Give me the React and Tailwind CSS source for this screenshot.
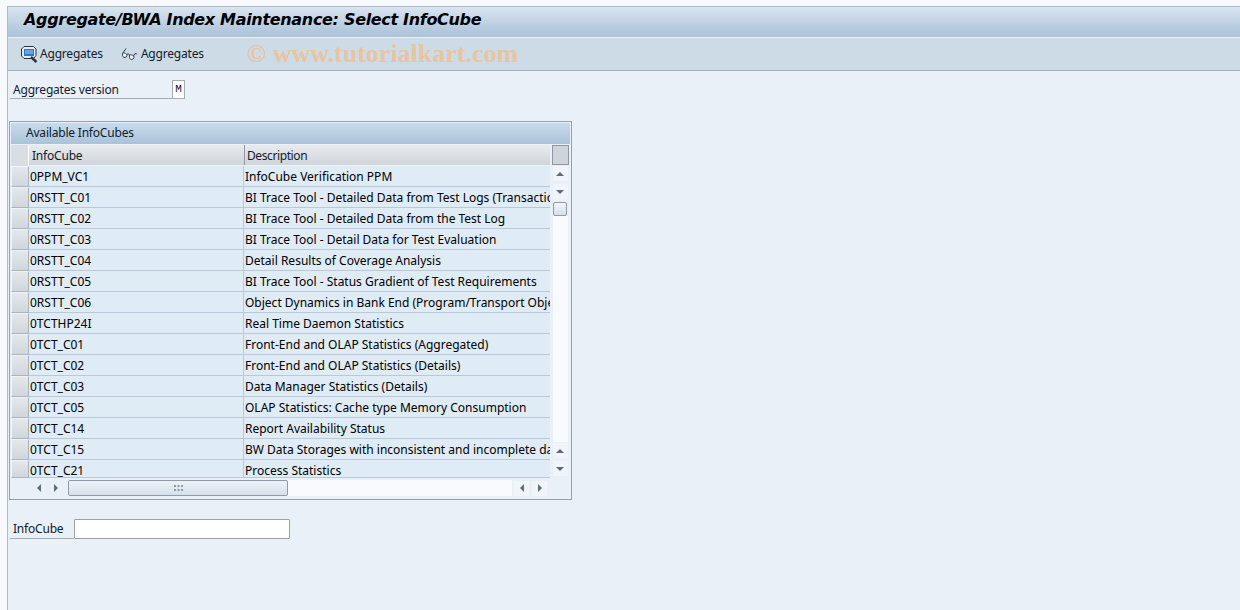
const FONT = "font-['Noto_Sans',sans-serif]"

const ROWS = [
    ['0PPM_VC1', 'InfoCube Verification PPM'],
    ['0RSTT_C01', 'BI Trace Tool - Detailed Data from Test Logs (Transaction'],
    ['0RSTT_C02', 'BI Trace Tool - Detailed Data from the Test Log'],
    ['0RSTT_C03', 'BI Trace Tool - Detail Data for Test Evaluation'],
    ['0RSTT_C04', 'Detail Results of Coverage Analysis'],
    ['0RSTT_C05', 'BI Trace Tool - Status Gradient of Test Requirements'],
    ['0RSTT_C06', 'Object Dynamics in Bank End (Program/Transport Objects)'],
    ['0TCTHP24I', 'Real Time Daemon Statistics'],
    ['0TCT_C01', 'Front-End and OLAP Statistics (Aggregated)'],
    ['0TCT_C02', 'Front-End and OLAP Statistics (Details)'],
    ['0TCT_C03', 'Data Manager Statistics (Details)'],
    ['0TCT_C05', 'OLAP Statistics: Cache type Memory Consumption'],
    ['0TCT_C14', 'Report Availability Status'],
    ['0TCT_C15', 'BW Data Storages with inconsistent and incomplete data'],
    ['0TCT_C21', 'Process Statistics']
]

const Arrow = ({ dir }) => {
    const points = {
        up: '1,7 9,7 5,3',
        down: '1,3 9,3 5,7',
        left: '7,1 7,9 3,5',
        right: '3,1 3,9 7,5'
    }
    return (
        <svg width="10" height="10" viewBox="0 0 10 10">
            <polygon points={points[dir]} fill="#5b6b78" />
        </svg>
    )
}

const ScrollButton = ({ dir, className = '' }) => (
    <div className={`w-[15px] h-[15px] bg-[#f1f5f9] flex items-center justify-center ${className}`}>
        <Arrow dir={dir} />
    </div>
)

const Row = ({ cube, text, clipped }) => (
    <div className={`flex ${clipped ? 'h-[18px]' : 'h-[21px]'}`}>
        <div className="w-[18px] shrink-0 bg-gradient-to-b from-[#e4e8ec] to-[#d0d6dc] border border-[#f0f3f6] border-r-[#aab4bd] border-b-[#aab4bd]" />
        <div className="flex-1 min-w-0 flex bg-[#dfebf5] border-b border-[#b9c9d8]">
            <div className="w-[215px] shrink-0 pl-[1px] pt-[1px] leading-[19px] border-r border-[#b9c9d8] text-black">{cube}</div>
            <div className="flex-1 min-w-0 pl-[1px] pt-[1px] leading-[19px] whitespace-nowrap overflow-hidden text-black">{text}</div>
        </div>
    </div>
)

const FindIcon = () => (
    <svg width="17" height="17" viewBox="0 0 17 17">
        <path d="M3 0.5H12.5L15 3V9.5L12.5 12.5H3L0.5 10V3Z" fill="#e4ecf3" stroke="#27333d" strokeWidth="1" />
        <rect x="3" y="3" width="10" height="7" fill="#2f78c8" />
        <path d="M4 5h8M4 7h8" stroke="#a9cdf0" strokeWidth="1" />
        <path d="M10 11l5.5 5" stroke="#27333d" strokeWidth="2.4" />
    </svg>
)

const GlassesIcon = () => (
    <svg width="17" height="14" viewBox="0 0 17 14" fill="none" stroke="#333c44" strokeWidth="1">
        <path d="M1.5 6.5L5 1.5" />
        <path d="M1.5 6.5C1 9 2.5 11 4 10.5C6 10 6.5 8 5.5 7C4.5 6 2.5 5.5 1.5 6.5Z" fill="#f1f5f9" />
        <path d="M6 7.5C7 6.5 8 7 8.5 8" />
        <path d="M8.5 8C8 11 9.5 13 11 12.5C13 12 13.5 10 12.5 9C11.5 8 9.5 7.5 8.5 8Z" fill="#f1f5f9" />
        <path d="M12.5 9L14 6.5L16 7" />
    </svg>
)

const Grip = () => (
    <svg width="9" height="6" viewBox="0 0 9 6" fill="#8e9aa5">
        <rect x="0" y="0" width="2" height="2" />
        <rect x="3.5" y="0" width="2" height="2" />
        <rect x="7" y="0" width="2" height="2" />
        <rect x="0" y="4" width="2" height="2" />
        <rect x="3.5" y="4" width="2" height="2" />
        <rect x="7" y="4" width="2" height="2" />
    </svg>
)

export default function App() {
    return (
        <div className={`${FONT} w-[1240px] h-[610px] overflow-hidden bg-[#f7f9fc] pt-[6px] pl-[7px] text-[12px] text-[#10202c]`}>
            <div className="h-[604px] flex flex-col bg-[#e9f0f7] border-l border-t border-[#a9bccd]">
                {/* Title */}
                <div className="h-[30px] shrink-0 bg-gradient-to-b from-[#d9e5f0] to-[#a9c1d9] pl-[16px] leading-[26px] font-['DejaVu_Sans',sans-serif] text-[16px] font-bold italic text-black whitespace-nowrap tracking-[-0.32px]">
                    Aggregate/BWA Index Maintenance: Select InfoCube
                </div>

                {/* Toolbar */}
                <div className="h-[34px] shrink-0 bg-[#cddbe6] border-t border-[#e9f0f6] border-b border-b-[#9fb1c1] flex items-center pl-[13px]">
                    <div className="flex items-center">
                        <FindIcon />
                        <span className="ml-[2px] tracking-[-0.2px]">Aggregates</span>
                    </div>
                    <div className="flex items-center ml-[18px]">
                        <GlassesIcon />
                        <span className="ml-[3px] tracking-[-0.2px]">Aggregates</span>
                    </div>
                    <span className="ml-[43px] font-['Liberation_Serif',serif] font-bold text-[26px] leading-none text-[#e8c4a0] whitespace-nowrap">
                        © www.tutorialkart.com
                    </span>
                </div>

                {/* Version */}
                <div className="flex h-[19px] mt-[9px] ml-[2px] shrink-0">
                    <div className="w-[162px] pl-[3px] leading-[19px] tracking-[-0.2px] border-b border-[#a6acb3]">Aggregates version</div>
                    <div className="w-[13px] h-[19px] bg-white border border-[#a6acb3] font-['Liberation_Mono',monospace] text-[11px] leading-[17px] text-center">M</div>
                </div>

                {/* Table */}
                <div className="w-[563px] h-[379px] mt-[22px] ml-[1px] shrink-0 border border-[#8ea2b3] p-[1px] bg-[#e9f0f7] flex flex-col">
                    <div className="h-[21px] shrink-0 bg-gradient-to-b from-[#c9dbeb] to-[#a9c3da] pl-[15px] leading-[20px] tracking-[-0.2px]">Available InfoCubes</div>
                    <div className="flex-1 min-h-0 flex mt-[1px]">
                        <div className="w-[539px] shrink-0 flex flex-col">
                            <div className="flex h-[21px] shrink-0">
                                <div className="w-[18px] shrink-0 bg-[#d9dee3] border-r border-white" />
                                <div className="flex-1 flex bg-gradient-to-b from-[#e8ebee] to-[#cfd5da] border-b border-[#eef2f6]">
                                    <div className="w-[216px] shrink-0 pl-[3px] pt-[1px] leading-[20px] tracking-[-0.2px] border-r border-[#8e98a1]">InfoCube</div>
                                    <div className="pl-[2px] pt-[1px] leading-[20px] tracking-[-0.4px]">Description</div>
                                </div>
                            </div>
                            {ROWS.map((row, i) => (
                                <Row key={row[0]} cube={row[0]} text={row[1]} clipped={i === ROWS.length - 1} />
                            ))}
                            {/* Horizontal scrollbar */}
                            <div className="flex-1 flex items-center">
                                <div className="w-[20px] shrink-0" />
                                <ScrollButton dir="left" className="bg-transparent" />
                                <ScrollButton dir="right" className="bg-transparent ml-[2px]" />
                                <div className="w-[220px] h-[16px] ml-[5px] shrink-0 bg-gradient-to-b from-[#edf2f7] to-[#d6e0e9] border border-[#8e9aa5] rounded-[2px] flex items-center justify-center">
                                    <Grip />
                                </div>
                                <div className="w-[224px] h-[16px] shrink-0 bg-[#f8fafc]" />
                                <ScrollButton dir="left" className="ml-[2px]" />
                                <ScrollButton dir="right" className="ml-[3px]" />
                            </div>
                        </div>

                        {/* Vertical scrollbar */}
                        <div className="ml-[1px] w-[18px] shrink-0 flex flex-col items-center">
                            <div className="w-[17px] h-[20px] bg-[#ced4da] border border-[#8e98a1] shrink-0" />
                            <ScrollButton dir="up" className="mt-[1px]" />
                            <ScrollButton dir="down" className="mt-[3px]" />
                            <div className="w-[14px] h-[14px] mt-[3px] bg-gradient-to-b from-[#f2f5f8] to-[#d6dfe8] border border-[#8e9aa5] rounded-[2px] shrink-0" />
                            <div className="w-[15px] flex-1 bg-[#f8fafc]" />
                            <ScrollButton dir="up" className="mt-[1px]" />
                            <ScrollButton dir="down" className="mt-[3px] mb-[22px]" />
                        </div>
                    </div>
                </div>

                {/* InfoCube input */}
                <div className="flex h-[20px] mt-[19px] ml-[2px] shrink-0">
                    <div className="w-[64px] pl-[3px] leading-[19px] tracking-[-0.2px] border-b border-[#a6acb3]">InfoCube</div>
                    <div className="w-[216px] h-[20px] bg-white border border-[#9aa1a8] rounded-[1px]" />
                </div>
            </div>
        </div>
    )
}
